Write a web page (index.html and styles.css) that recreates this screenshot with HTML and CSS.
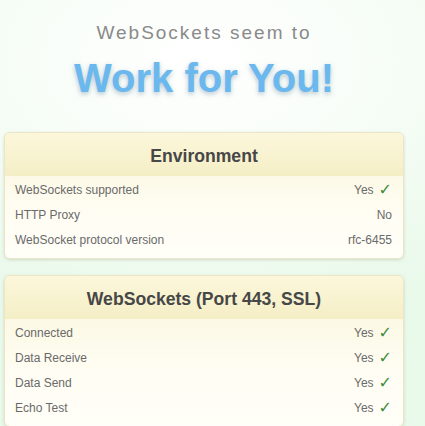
FILE: index.html
```html
<!DOCTYPE html>
<html>
<head>
<meta charset="utf-8">
<link rel="stylesheet" href="styles.css">
</head>
<body>
<div class="page">
  <div class="hero">
    <div class="lead">WebSockets seem to</div>
    <div class="big">Work for You!</div>
  </div>
  <section class="card">
    <h2 class="card-head">Environment</h2>
    <ul class="rows">
      <li class="row"><span>WebSockets supported</span><span class="val">Yes <span class="ok">✓</span></span></li>
      <li class="row"><span>HTTP Proxy</span><span class="val">No</span></li>
      <li class="row"><span>WebSocket protocol version</span><span class="val">rfc-6455</span></li>
    </ul>
  </section>
  <section class="card">
    <h2 class="card-head">WebSockets (Port 443, SSL)</h2>
    <ul class="rows">
      <li class="row"><span>Connected</span><span class="val">Yes <span class="ok">✓</span></span></li>
      <li class="row"><span>Data Receive</span><span class="val">Yes <span class="ok">✓</span></span></li>
      <li class="row"><span>Data Send</span><span class="val">Yes <span class="ok">✓</span></span></li>
      <li class="row"><span>Echo Test</span><span class="val">Yes <span class="ok">✓</span></span></li>
    </ul>
  </section>
</div>
</body>
</html>
```
FILE: styles.css
```css
html, body {
  margin: 0;
  padding: 0;
}
body {
  font-family: "Liberation Sans", Arial, sans-serif;
  background: radial-gradient(ellipse 420px 260px at 200px 60px, #ffffff 0%, #f7fdf7 45%, #e9f9ea 100%);
  background-color: #e9f9ea;
  min-height: 426px;
  overflow: hidden;
}
.page {
  width: 400px;
  margin-left: 4px;
  padding-top: 22px;
}
.hero {
  text-align: center;
  height: 110px;
}
.lead {
  font-size: 19px;
  color: #8a8a8a;
  letter-spacing: 2px;
  line-height: 22px;
}
.big {
  margin-top: 11px;
  font-size: 40px;
  font-weight: bold;
  color: #6ab8ee;
  line-height: 46px;
  text-shadow: 0 2px 5px rgba(120, 150, 170, 0.55);
}
.card {
  border: 1px solid #ece6c8;
  border-radius: 6px;
  background: linear-gradient(#f8f4d8, #fffdf2 60%, #fffef8);
  box-shadow: 0 1px 3px rgba(150, 160, 130, 0.35);
  margin-bottom: 16px;
  overflow: hidden;
}
.card-head {
  margin: 0;
  padding-top: 3px;
  height: 40px;
  line-height: 40px;
  text-align: center;
  font-size: 17.6px;
  font-weight: bold;
  color: #474747;
  background: linear-gradient(#fcf7db, #f4eec6);
}
.rows {
  list-style: none;
  margin: 0;
  padding: 1px 0 6px;
}
.row {
  display: flex;
  justify-content: space-between;
  align-items: center;
  height: 25px;
  padding: 0 11px 0 10px;
  font-size: 12px;
  color: #6a6a6a;
}
.val {
  display: flex;
  align-items: center;
  gap: 5px;
}
.ok {
  color: #3d8b3d;
  font-size: 16px;
  font-weight: bold;
  font-family: "DejaVu Sans", sans-serif;
}
```
